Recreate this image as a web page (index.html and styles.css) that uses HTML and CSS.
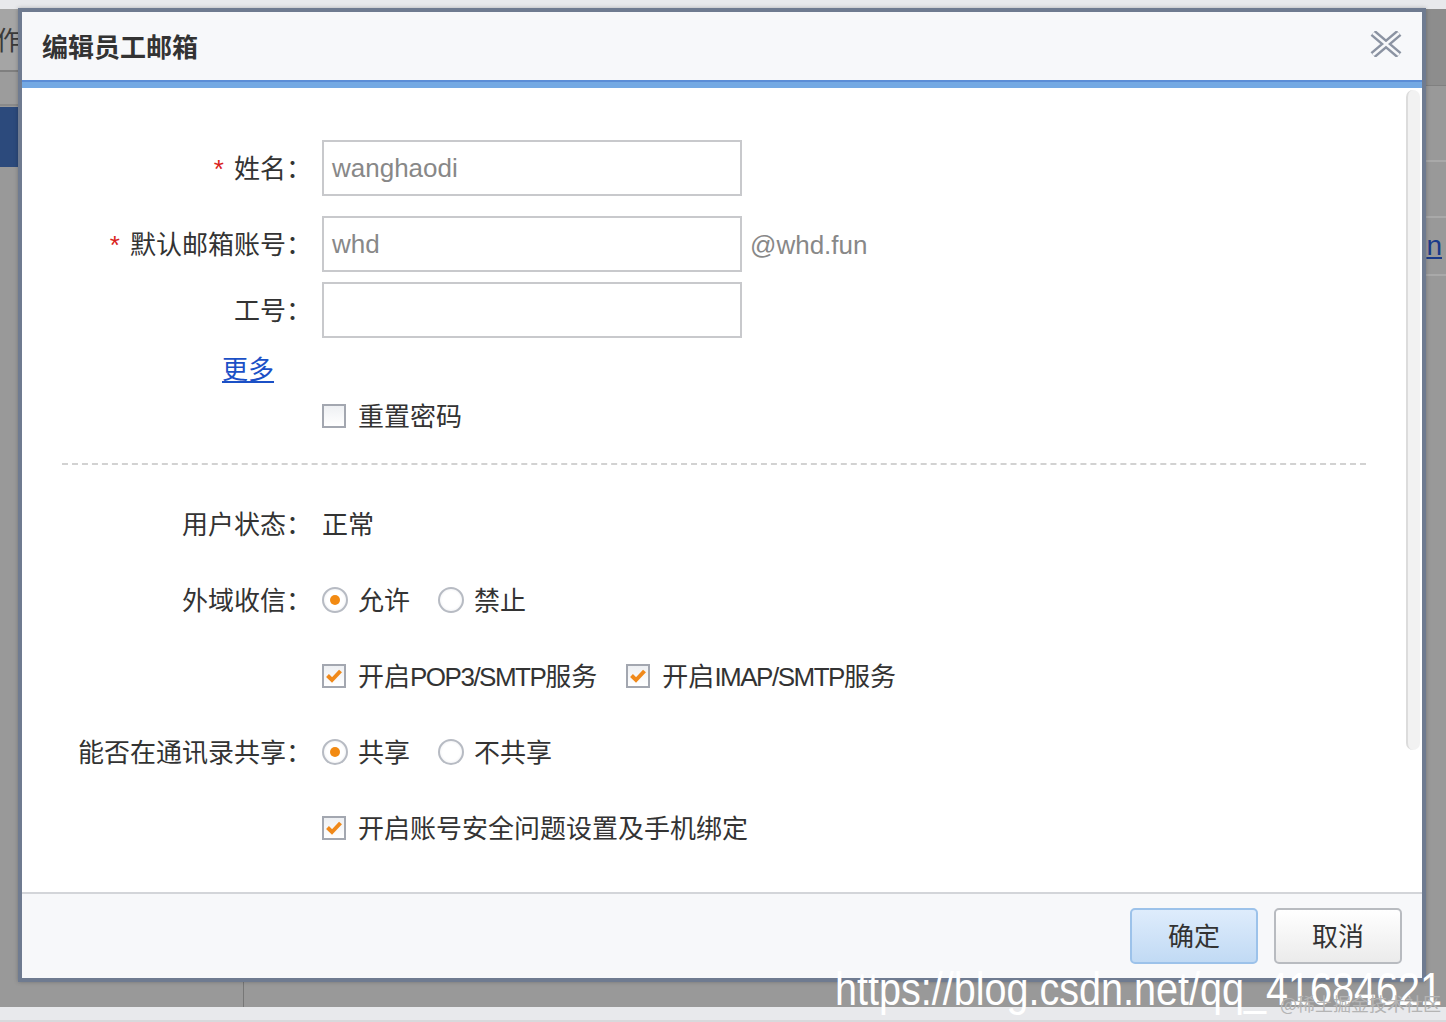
FILE: index.html
```html
<!DOCTYPE html>
<html lang="zh-CN">
<head>
<meta charset="utf-8">
<title>编辑员工邮箱</title>
<link rel="stylesheet" href="styles.css">
</head>
<body>
<div class="page">
  <div class="bg-top"></div>
  <div class="bg-mid">
    <div class="bg-left">
      <div class="bg-tab"><span class="bg-tab-text">工作</span></div>
      <div class="bg-sub"></div>
      <div class="bg-nav"></div>
    </div>
    <div class="bg-right">
      <div class="bg-head"></div>
      <div class="bg-row r1"></div>
      <div class="bg-row r2"></div>
      <div class="bg-row r3"><a class="bg-link">n</a></div>
    </div>
  </div>
  <div class="bg-bottom"></div>

  <div class="dialog">
    <div class="dlg-head">
      <h2 class="dlg-title">编辑员工邮箱</h2>
      <span class="dlg-close">
        <svg width="32" height="26" viewBox="0 0 32 26">
          <path d="M3 2 L29 24 M29 2 L3 24" stroke="#8b93a2" stroke-width="7.5" stroke-linecap="butt" fill="none"/>
          <path d="M3 2 L29 24 M29 2 L3 24" stroke="#f7f8fa" stroke-width="2.6" stroke-linecap="butt" fill="none"/>
        </svg>
      </span>
    </div>
    <div class="dlg-band"></div>
    <div class="dlg-body">
      <div class="form">
        <div class="row">
          <label class="lbl"><span class="req">*</span>姓名：</label>
          <div class="ctl"><span class="input">wanghaodi</span></div>
        </div>
        <div class="row row-g20">
          <label class="lbl"><span class="req">*</span>默认邮箱账号：</label>
          <div class="ctl"><span class="input">whd</span><span class="suffix">@whd.fun</span></div>
        </div>
        <div class="row row-g10">
          <label class="lbl">工号：</label>
          <div class="ctl"><span class="input"></span></div>
        </div>
        <div class="more-row"><a class="more">更多</a></div>
        <div class="row row-cb">
          <span class="lbl"></span>
          <div class="ctl"><span class="cb"></span><span class="opt">重置密码</span></div>
        </div>
        <div class="divider"></div>
        <div class="row row-first">
          <span class="lbl">用户状态：</span>
          <div class="ctl"><span class="val">正常</span></div>
        </div>
        <div class="row row-g20">
          <span class="lbl">外域收信：</span>
          <div class="ctl">
            <span class="radio on"></span><span class="opt">允许</span>
            <span class="radio gap"></span><span class="opt">禁止</span>
          </div>
        </div>
        <div class="row row-g20">
          <span class="lbl"></span>
          <div class="ctl">
            <span class="cb on"><svg width="16" height="14" viewBox="0 0 16 14"><path d="M1.5 6.5 L6 11 L14.5 2" stroke="#f0891a" stroke-width="4" fill="none"/></svg></span><span class="opt">开启<span class="caps">POP3/SMTP</span>服务</span>
            <span class="cb on gap2"><svg width="16" height="14" viewBox="0 0 16 14"><path d="M1.5 6.5 L6 11 L14.5 2" stroke="#f0891a" stroke-width="4" fill="none"/></svg></span><span class="opt">开启<span class="caps">IMAP/SMTP</span>服务</span>
          </div>
        </div>
        <div class="row row-g20">
          <span class="lbl">能否在通讯录共享：</span>
          <div class="ctl">
            <span class="radio on"></span><span class="opt">共享</span>
            <span class="radio gap"></span><span class="opt">不共享</span>
          </div>
        </div>
        <div class="row row-g20">
          <span class="lbl"></span>
          <div class="ctl">
            <span class="cb on"><svg width="16" height="14" viewBox="0 0 16 14"><path d="M1.5 6.5 L6 11 L14.5 2" stroke="#f0891a" stroke-width="4" fill="none"/></svg></span><span class="opt">开启账号安全问题设置及手机绑定</span>
          </div>
        </div>
      </div>
      <div class="scroll"><div class="scroll-track"></div></div>
    </div>
    <div class="dlg-foot">
      <button class="btn btn-primary">确定</button>
      <button class="btn">取消</button>
    </div>
  </div>

  <div class="wm">https://blog.csdn.net/qq_41684621</div>
  <div class="wm2">@稀土掘金技术社区</div>
</div>
</body>
</html>
```

FILE: styles.css
```css
* { box-sizing: border-box; }
html, body { margin: 0; padding: 0; }
body {
  background: #999;
  font-family: "Liberation Sans", "Noto Sans CJK SC", "Microsoft YaHei", sans-serif;
  color: #333;
}
.page {
  position: relative;
  width: 1446px;
  height: 1022px;
  overflow: hidden;
  display: flex;
  flex-direction: column;
}

/* background page behind the overlay */
.bg-top { height: 9px; background: #e8e9ec; }
.bg-mid { height: 998px; display: flex; background: #999; }
.bg-left { width: 244px; border-right: 1px solid #777; }
.bg-tab {
  height: 63px;
  background: #a5a5a5;
  border-bottom: 2px solid #7f7f7f;
  display: flex;
  align-items: center;
  overflow: hidden;
}
.bg-tab-text { margin-left: -30px; font-size: 26px; color: #3a3a3a; padding-bottom: 3px; }
.bg-sub { height: 34px; background: #9c9c9c; border-bottom: 2px solid #8a8a8a; }
.bg-nav { margin-top: 1px; height: 60px; background: #2c4a7c; }
.bg-right { flex: 1; display: flex; flex-direction: column; }
.bg-head { height: 77px; background: #8d8d8d; border-bottom: 1px solid #808080; }
.bg-row { border-bottom: 2px solid #a9a9a9; display: flex; align-items: center; justify-content: flex-end; }
.r1 { height: 76px; }
.r2 { height: 56px; }
.r3 { height: 58px; }
.bg-link { font-family: "Liberation Sans", sans-serif; font-size: 28px; color: #1a3a8a; text-decoration: underline; margin-right: 4px; }
.bg-bottom { height: 15px; background: #e8e9ec; border-bottom: 2px solid #d8d9dc; }

/* dialog */
.dialog {
  position: absolute;
  left: 18px;
  top: 8px;
  width: 1408px;
  height: 974px;
  border: 4px solid #6f7b90;
  background: #fff;
  display: flex;
  flex-direction: column;
  box-shadow: 0 0 4px rgba(0,0,0,0.25);
}
.dlg-head {
  height: 68px;
  background: #f7f8fa;
  display: flex;
  align-items: center;
  justify-content: space-between;
  padding: 0 20px;
}
.dlg-title { margin: 0; font-size: 26px; font-weight: 700; color: #333; margin-top: -2px; }
.dlg-close { display: flex; margin-top: -4px; }
.dlg-band { height: 8px; background: #74a9e3; border-top: 2px solid #5b8dd6; }
.dlg-body { height: 804px; display: flex; }
.form { flex: 1; padding: 52px 40px 0 40px; }
.scroll { width: 16px; padding-top: 2px; }
.scroll-track {
  width: 14px;
  height: 660px;
  background: #f2f2f2;
  border-left: 2px solid #dcdcdc;
  border-radius: 7px;
}

.row {
  display: grid;
  grid-template-columns: 250px 1fr;
  column-gap: 10px;
  align-items: center;
  height: 56px;
  font-size: 26px;
}
.row-g20 { margin-top: 20px; }
.row-g10 { margin-top: 10px; }
.row-cb { height: 40px; margin-top: 7px; }
.row-first { margin-top: 31px; }
.lbl { text-align: right; color: #333; white-space: nowrap; font-size: 26px; padding-bottom: 3px; }
.req { color: #d9231c; margin-right: 10px; }
.ctl { display: flex; align-items: center; white-space: nowrap; }
.input {
  display: flex;
  align-items: center;
  width: 420px;
  height: 56px;
  border: 2px solid #c8c9cc;
  padding-left: 8px;
  color: #888;
  font-size: 26px;
  background: #fff;
}
.suffix { margin-left: 8px; color: #888; font-size: 26px; padding-top: 2px; }
.more-row { height: 40px; margin-top: 11px; padding-left: 160px; display: flex; align-items: center; }
.more { font-size: 26px; color: #1b50c6; text-decoration: underline; padding-bottom: 3px; }
.divider { margin-top: 27px; border-top: 2px dashed #d2d2d2; }
.val { color: #333; padding-bottom: 3px; }
.opt { color: #333; margin-left: 12px; padding-bottom: 3px; }
.caps { letter-spacing: -1.5px; }
.cb {
  width: 24px;
  height: 24px;
  border: 2px solid #a3a7b0;
  background: linear-gradient(#eef0f3, #fff);
  display: flex;
  align-items: center;
  justify-content: center;
  flex: none;
}
.gap2 { margin-left: 29px; }
.radio {
  width: 26px;
  height: 26px;
  border-radius: 50%;
  border: 2px solid #b7bbc3;
  background: radial-gradient(circle, #fff 55%, #e4e6ea 100%);
  display: flex;
  align-items: center;
  justify-content: center;
  flex: none;
}
.radio.on::after {
  content: "";
  width: 10px;
  height: 10px;
  border-radius: 50%;
  background: #f28a12;
}
.radio + .opt { margin-left: 10px; }
.gap { margin-left: 28px; }

.dlg-foot {
  height: 86px;
  border-top: 2px solid #d3d5d9;
  background: #f7f8fa;
  display: flex;
  justify-content: flex-end;
  align-items: flex-start;
  gap: 16px;
  padding: 14px 20px 0 0;
}
.btn {
  width: 128px;
  height: 56px;
  border-radius: 5px;
  border: 2px solid #b8bbc0;
  background: linear-gradient(#ffffff, #ebebeb);
  font-family: "Liberation Sans", "Noto Sans CJK SC", "Microsoft YaHei", sans-serif;
  font-size: 26px;
  color: #333;
  padding: 0 0 3px 0;
}
.btn-primary {
  border-color: #9cc2ea;
  background: linear-gradient(#deecfc, #c1daf4);
}

/* watermark */
.wm {
  position: absolute;
  left: 835px;
  top: 966px;
  font-family: "Liberation Sans", Arial, sans-serif;
  font-size: 46px;
  line-height: 46px;
  color: #fff;
  white-space: nowrap;
  transform: scaleX(0.86);
  transform-origin: left top;
}
.wm2 {
  position: absolute;
  left: 1280px;
  top: 992px;
  font-family: "Noto Sans CJK SC", sans-serif;
  font-size: 18px;
  line-height: 22px;
  color: #b4b4b4;
  white-space: nowrap;
}
```
